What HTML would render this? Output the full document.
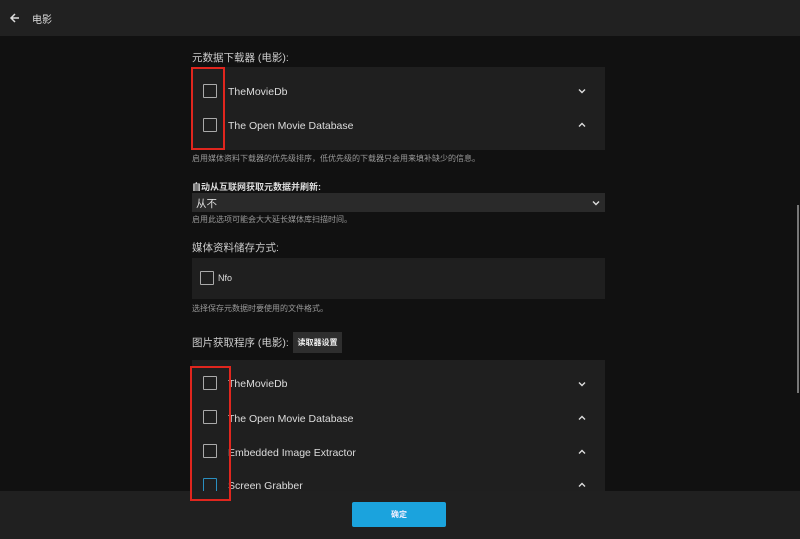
<!DOCTYPE html>
<html><head><meta charset="utf-8"><style>
*{margin:0;padding:0;box-sizing:border-box}
body{width:800px;height:539px;background:#111;font-family:"Liberation Sans","Noto Sans CJK SC",sans-serif;color:#ddd;position:relative;overflow:hidden}
.a{position:absolute}
.hdr{left:0;top:0;width:800px;height:36px;background:#212121}
.panel{background:#1f1f1f;left:192px;width:413px}
.cb{position:absolute;width:14px;height:14px;border:1.5px solid #aaa;border-radius:1px}
.lbl{position:absolute;font-size:10.5px;color:#ddd;white-space:nowrap}
.chev{position:absolute;left:578px;width:8px;height:8px}
.desc{position:absolute;left:192px;font-size:8px;color:#999;white-space:nowrap}
.h{position:absolute;left:192px;font-size:10.5px;color:#ccc;white-space:nowrap}
.red{position:absolute;border:2px solid #e0261e}
</style></head><body>
<div class="a hdr"></div>
<svg class="a" style="left:9px;top:12px" width="12" height="12" viewBox="0 0 12 12"><path d="M10 6H2M6 2L2 6l4 4" stroke="#ddd" stroke-width="1.5" fill="none"/></svg>
<div class="a" style="left:32px;top:11px;font-size:10px;color:#ddd">电影</div>

<div class="h" style="top:50px">元数据下载器 (电影):</div>
<div class="a panel" style="top:67px;height:83px"></div>
<div class="cb" style="left:203px;top:84px"></div>
<div class="lbl" style="left:228px;top:86px">TheMovieDb</div>
<div class="cb" style="left:203px;top:118px"></div>
<div class="lbl" style="left:228px;top:120px">The Open Movie Database</div>
<svg class="chev" style="top:87px" viewBox="0 0 8 8"><path d="M1 2.5l3 3 3-3" stroke="#ddd" stroke-width="1.4" fill="none"/></svg>
<svg class="chev" style="top:121px" viewBox="0 0 8 8"><path d="M1 5.5l3-3 3 3" stroke="#ddd" stroke-width="1.4" fill="none"/></svg>
<div class="red" style="left:191px;top:67px;width:34px;height:83px"></div>
<div class="desc" style="top:153px">启用媒体资料下载器的优先级排序，低优先级的下载器只会用来填补缺少的信息。</div>

<div class="h" style="top:180px;font-size:9px;font-weight:bold;color:#ddd">自动从互联网获取元数据并刷新:</div>
<div class="a" style="left:192px;top:193px;width:413px;height:19px;background:#2a2a2a"></div>
<div class="lbl" style="left:196px;top:196px">从不</div>
<svg class="a" style="left:592px;top:199px" width="8" height="8" viewBox="0 0 8 8"><path d="M1 2.5l3 3 3-3" stroke="#ddd" stroke-width="1.4" fill="none"/></svg>
<div class="desc" style="top:214px">启用此选项可能会大大延长媒体库扫描时间。</div>

<div class="h" style="top:240px">媒体资料储存方式:</div>
<div class="a panel" style="top:258px;height:41px"></div>
<div class="cb" style="left:200px;top:271px"></div>
<div class="lbl" style="left:218px;top:273px;font-size:9px">Nfo</div>
<div class="desc" style="top:303px">选择保存元数据时要使用的文件格式。</div>

<div class="h" style="top:335px">图片获取程序 (电影):</div>
<div class="a" style="left:293px;top:332px;width:49px;height:21px;background:#2e2e2e;font-size:8px;font-weight:bold;color:#eee;text-align:center;line-height:21px">读取器设置</div>
<div class="a panel" style="top:360px;height:140px"></div>
<div class="cb" style="left:203px;top:376px"></div>
<div class="lbl" style="left:228px;top:378px">TheMovieDb</div>
<div class="cb" style="left:203px;top:410px"></div>
<div class="lbl" style="left:228px;top:413px">The Open Movie Database</div>
<div class="cb" style="left:203px;top:444px"></div>
<div class="lbl" style="left:228px;top:447px">Embedded Image Extractor</div>
<div class="cb" style="left:203px;top:478px;border-color:#2a8fc0"></div>
<div class="lbl" style="left:228px;top:480px">Screen Grabber</div>
<svg class="chev" style="top:380px" viewBox="0 0 8 8"><path d="M1 2.5l3 3 3-3" stroke="#ddd" stroke-width="1.4" fill="none"/></svg>
<svg class="chev" style="top:414px" viewBox="0 0 8 8"><path d="M1 5.5l3-3 3 3" stroke="#ddd" stroke-width="1.4" fill="none"/></svg>
<svg class="chev" style="top:448px" viewBox="0 0 8 8"><path d="M1 5.5l3-3 3 3" stroke="#ddd" stroke-width="1.4" fill="none"/></svg>
<svg class="chev" style="top:481px" viewBox="0 0 8 8"><path d="M1 5.5l3-3 3 3" stroke="#ddd" stroke-width="1.4" fill="none"/></svg>

<div class="a" style="left:0;top:491px;width:800px;height:48px;background:#202020"></div>
<div class="a" style="left:352px;top:502px;width:94px;height:25px;background:#1ba3dd;border-radius:2px;font-size:8px;font-weight:bold;color:#eef;text-align:center;line-height:25px">确定</div>
<div class="red" style="left:190px;top:366px;width:41px;height:135px"></div>
<div class="a" style="left:797px;top:205px;width:2px;height:188px;background:#777"></div>
</body></html>
